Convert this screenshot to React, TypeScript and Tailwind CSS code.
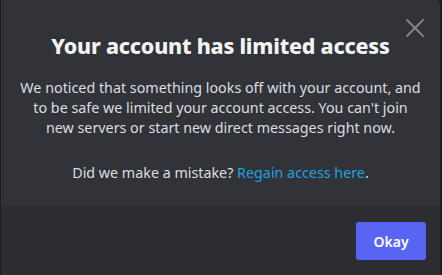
import { X } from 'lucide-react'

export default function App() {
  return (
    <div className="w-[442px] h-[275px] bg-[#1e1f22] pl-px overflow-hidden" style={{ fontFamily: '"Noto Sans", "Open Sans", sans-serif' }}>
      <div className="w-[439px] h-[275px] flex flex-col rounded-tr-[5px] overflow-hidden">
        <div className="relative bg-[#313338] h-[206px] flex flex-col items-center pt-[31px] px-[18px]">
          <button className="absolute right-[9px] top-[12px] text-[#80848e]">
            <X size={32} strokeWidth={1.4} />
          </button>
          <h1 className="text-[21.4px] leading-[30px] font-extrabold text-[#f2f3f5] tracking-[-0.2px] whitespace-nowrap">
            Your account has limited access
          </h1>
          <p className="mt-[17px] text-[14.3px] leading-[20px] text-[#dbdee1] text-center">
            We noticed that something looks off with your account, and to be safe we limited your account access. You can't join new servers or start new direct messages right now.
          </p>
          <p className="mt-[25px] text-[14.3px] leading-[20px] text-[#dbdee1] text-center">
            Did we make a mistake? <span className="text-[#1ea2e0]">Regain access here</span>.
          </p>
        </div>
        <div className="flex-1 bg-[#2b2d31] flex justify-end items-start pt-4 pr-[14px]">
          <button className="w-[70px] h-[38px] rounded-[3px] bg-[#5865f2] text-white text-[14px] font-semibold">
            Okay
          </button>
        </div>
      </div>
    </div>
  )
}
